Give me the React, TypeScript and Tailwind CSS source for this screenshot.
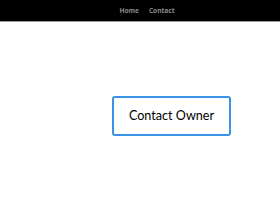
import React from 'react';

const App: React.FC = () => {
  return (
    <div className="w-[280px] h-[210px] bg-white" style={{ fontFamily: '"Open Sans", "Liberation Sans", sans-serif' }}>
      <nav className="h-[22px] bg-black border-b border-[#9a9a9a] flex items-center justify-center gap-[10px] pl-[14px]">
        <span className="text-[6.6px] font-bold text-[#8a8a8a]">Home</span>
        <span className="text-[6.6px] font-bold text-[#8a8a8a]">Contact</span>
      </nav>
      <div className="flex pl-[112px] pt-[74px]">
        <button className="w-[119px] h-[40px] border-2 border-[#3b93e6] rounded-[3px] bg-white text-[12.6px] text-black flex items-center justify-center" style={{ fontFamily: 'Lato, "Liberation Sans", sans-serif' }}>
          Contact Owner
        </button>
      </div>
    </div>
  );
};

export default App;
